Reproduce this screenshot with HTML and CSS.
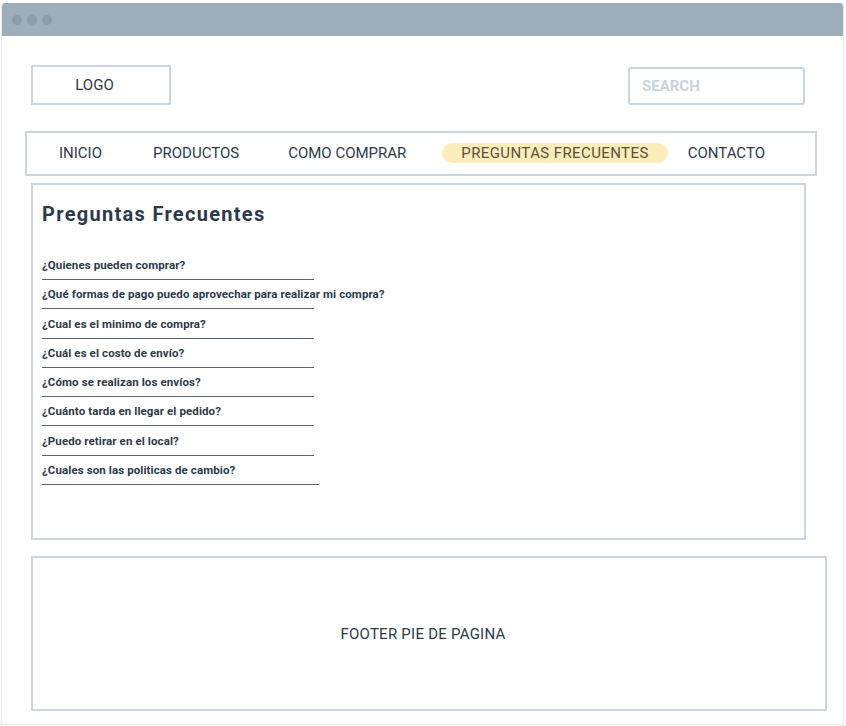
FILE: index.html
```html
<!DOCTYPE html>
<html lang="es">
<head>
<meta charset="utf-8">
<title>Preguntas Frecuentes</title>
<link rel="stylesheet" href="styles.css">
</head>
<body>
<div class="window">
  <div class="titlebar">
    <span class="dot"></span><span class="dot"></span><span class="dot"></span>
  </div>
  <div class="page">
    <header class="header">
      <div class="logo">LOGO</div>
      <div class="search">SEARCH</div>
    </header>
    <nav class="nav">
      <a class="nav-item inicio">INICIO</a>
      <a class="nav-item productos">PRODUCTOS</a>
      <a class="nav-item comprar">COMO COMPRAR</a>
      <a class="nav-item active">PREGUNTAS FRECUENTES</a>
      <a class="nav-item contacto">CONTACTO</a>
    </nav>
    <main class="content">
      <h1 class="title">Preguntas Frecuentes</h1>
      <ul class="faq">
        <li><span class="q">¿Quienes pueden comprar?</span><span class="rule"></span></li>
        <li><span class="q">¿Qué formas de pago puedo aprovechar para realizar mi compra?</span><span class="rule"></span></li>
        <li><span class="q">¿Cual es el minimo de compra?</span><span class="rule"></span></li>
        <li><span class="q">¿Cuál es el costo de envío?</span><span class="rule"></span></li>
        <li><span class="q">¿Cómo se realizan los envíos?</span><span class="rule"></span></li>
        <li><span class="q">¿Cuánto tarda en llegar el pedido?</span><span class="rule"></span></li>
        <li><span class="q">¿Puedo retirar en el local?</span><span class="rule"></span></li>
        <li><span class="q">¿Cuales son las politicas de cambio?</span><span class="rule long"></span></li>
      </ul>
    </main>
    <footer class="footer">FOOTER PIE DE PAGINA</footer>
  </div>
</div>
</body>
</html>
```
FILE: styles.css
```css
* { box-sizing: border-box; }
html, body { margin: 0; padding: 0; background: #ffffff; }
body {
  font-family: Roboto, "Liberation Sans", sans-serif;
  color: #2c3a4a;
}
.window {
  margin: 3px 2px 0 1px;
  height: 722px;
  border: 1px solid #e4e9ed;
  border-top: none;
  border-radius: 4px 4px 0 0;
  overflow: hidden;
}
.titlebar {
  height: 33px;
  background: #9eadba;
  display: flex;
  align-items: center;
  gap: 5px;
  padding-left: 10px;
}
.dot {
  width: 10px;
  height: 10px;
  border-radius: 50%;
  background: #8d9cab;
}
.page {
  display: flex;
  flex-direction: column;
}
.header {
  display: flex;
  justify-content: space-between;
  align-items: flex-start;
  margin-top: 29px;
  padding-left: 29px;
  padding-right: 38px;
}
.logo {
  width: 140px;
  height: 40px;
  border: 2px solid #cad5df;
  display: flex;
  align-items: center;
  justify-content: center;
  font-size: 15px;
  padding-right: 13px;
}
.search {
  margin-top: 2px;
  width: 177px;
  height: 38px;
  border: 2px solid #cad5df;
  border-radius: 3px;
  padding-left: 12px;
  display: flex;
  align-items: center;
  font-size: 15px;
  font-weight: 700;
  color: #c9d4de;
}
.nav {
  margin: 26px 0 0 23px;
  width: 792px;
  height: 45px;
  border: 2px solid #cad5df;
  display: flex;
  align-items: center;
  padding-left: 32px;
  padding-bottom: 1px;
}
.nav-item {
  font-size: 15px;
  line-height: 20px;
  color: #2c3a4a;
}
.productos { margin-left: 51px; }
.comprar { margin-left: 49px; }
.active {
  margin-left: 36px;
  padding: 0 19px;
  letter-spacing: 0.4px;
  background: #fdedbb;
  border-radius: 10px;
  color: #5a5236;
}
.contacto { margin-left: 20px; }
.content {
  margin: 7px 0 0 29px;
  width: 775px;
  height: 357px;
  border: 2px solid #cad5df;
  padding: 17px 0 0 9px;
}
.title {
  margin: 0;
  font-size: 20px;
  font-weight: 700;
  line-height: 24px;
  letter-spacing: 1.3px;
}
.faq {
  list-style: none;
  margin: 32px 0 0;
  padding: 0;
}
.faq li {
  display: flex;
  flex-direction: column;
  height: 29.3px;
}
.q {
  font-size: 11.5px;
  font-weight: 700;
  line-height: 14px;
  letter-spacing: 0.1px;
}
.rule {
  display: block;
  width: 272px;
  height: 1px;
  margin-top: 7px;
  background: #5a6470;
}
.rule.long { width: 277px; }
.footer {
  margin: 16px 0 0 29px;
  width: 796px;
  height: 155px;
  border: 2px solid #cad5df;
  display: flex;
  align-items: center;
  justify-content: center;
  font-size: 15px;
  letter-spacing: 0.25px;
  padding-top: 0;
  padding-right: 12px;
}
```
